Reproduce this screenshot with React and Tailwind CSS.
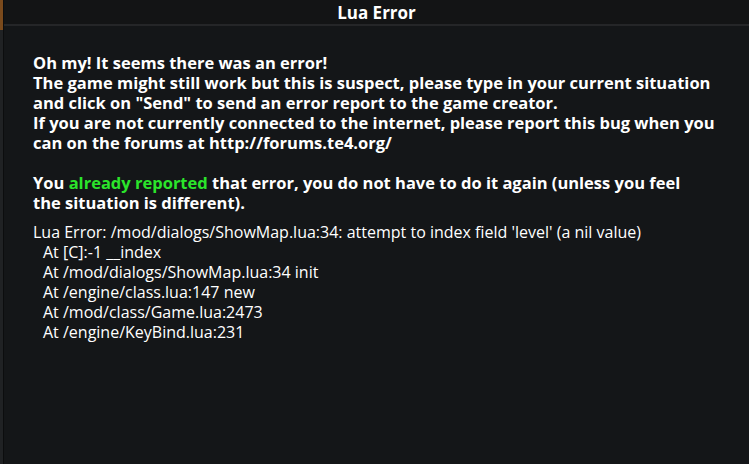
const trace = [
  "At [C]:-1 __index",
  "At /mod/dialogs/ShowMap.lua:34 init",
  "At /engine/class.lua:147 new",
  "At /mod/class/Game.lua:2473",
  "At /engine/KeyBind.lua:231",
];

const App = () => {
  return (
    <div className="w-[749px] h-[464px] flex bg-[#141618] overflow-hidden" style={{ fontFamily: "'Open Sans', 'DejaVu Sans', sans-serif" }}>
      <div className="w-[4px] h-full flex flex-col bg-[#202224] border-r border-[#0c0d0e]">
        <div className="h-[30px] bg-[#7a4a1c]" />
      </div>
      <div className="flex-1 flex flex-col">
        <div className="h-[26px] flex items-center justify-center bg-[#131415] border-b-2 border-[#252628]">
          <span className="text-white font-bold text-[17px] leading-none">Lua Error</span>
        </div>
        <div className="pl-[29px] pr-2 pt-[27px] text-white leading-[20px]">
          <div className="font-bold text-[16.5px] whitespace-nowrap">
            <p>Oh my! It seems there was an error!</p>
            <p>The game might still work but this is suspect, please type in your current situation</p>
            <p>and click on "Send" to send an error report to the game creator.</p>
            <p>If you are not currently connected to the internet, please report this bug when you</p>
            <p>can on the forums at http://forums.te4.org/</p>
            <p className="h-[20px]" />
            <p>
              You <span className="text-[#2be52b]">already reported</span> that error, you do not have to do it again (unless you feel
            </p>
            <p>the situation is different).</p>
          </div>
          <div className="mt-[9px] text-[16px] whitespace-nowrap">
            <p>Lua Error: /mod/dialogs/ShowMap.lua:34: attempt to index field 'level' (a nil value)</p>
            {trace.map((t) => (
              <p key={t} className="pl-[10px]">{t}</p>
            ))}
          </div>
        </div>
      </div>
    </div>
  );
};

export default App;
